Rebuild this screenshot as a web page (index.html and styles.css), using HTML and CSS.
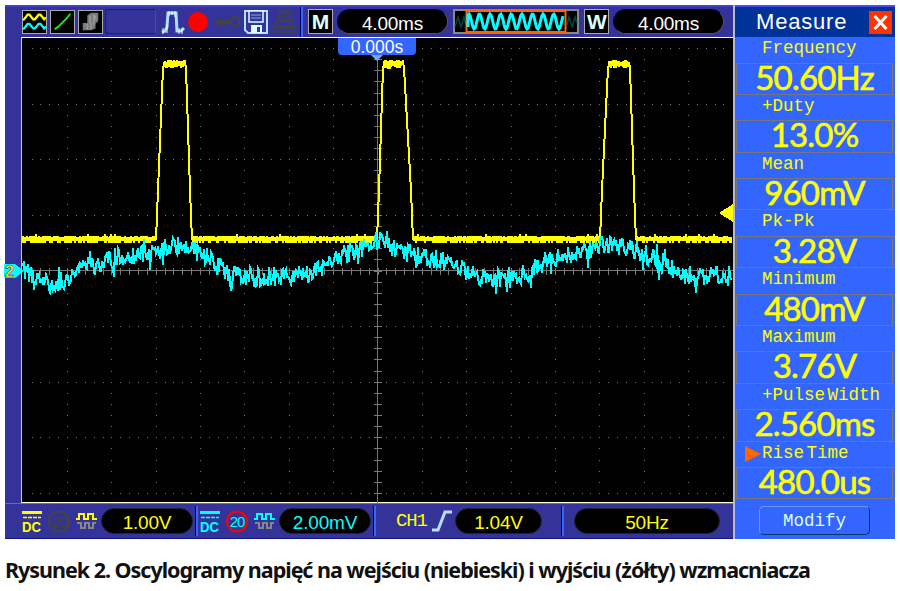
FILE: index.html
```
<!DOCTYPE html>
<html lang="pl">
<head>
  <meta charset="UTF-8">
  <meta name="viewport" content="width=device-width, initial-scale=1.0">
  <title>Oscylogramy</title>
  <link rel="stylesheet" href="styles.css">
</head>
<body>
  <figure>
    <div class="scope">
      <div class="main">
        <div class="toolbar">
          <svg class="icon box waves" viewBox="0 0 25 24">
            <path d="M0 10L2 8L5 4H7L11 9H13L17 4H19L23 9L25 7" stroke="#ff0"/>
            <path d="M0 20L2 18L5 14H7L11 19H13L17 14H19L23 19L25 17" stroke="#0ff"/>
          </svg>
          <svg class="icon box line" viewBox="0 0 25 24"><path d="M4 20L8 17L17 8L21 3" stroke="#0f0"/></svg>
          <svg class="icon box blob" viewBox="0 0 25 24">
            <path d="M9 5L13 2H21V11L18 14V19L13 21H4V13H9Z" fill="#777"/>
            <path d="M12 5V13M16 4V15M9 14V20M13 13V20M18 5V10" stroke="#999"/>
            <path d="M5 16H17M10 9H20" stroke="#888" stroke-width="1"/>
          </svg>
          <div class="slot"></div>
          <svg class="icon pulse" viewBox="0 0 25 24">
            <path d="M1 22L4 21L6 17L7 3H15L16 21H20L23 18" stroke="#adf" stroke-width="3"/>
            <path d="M2 18V24M6 14V23M8 1V6M11 1V5M14 1V7M18 18V24M21 18V24" stroke="#eff" stroke-width="1"/>
          </svg>
          <i class="record"></i>
          <svg class="icon key" viewBox="0 0 26 16">
            <path d="M0 7H16M3 7V11M6 7V11M10 7V11M13 7V10" stroke="#444" stroke-width="3"/>
            <circle cx="20" cy="7.500" r="4.500" stroke="#444"/>
          </svg>
          <svg class="icon floppy" viewBox="0 0 24 24">
            <path d="M1 1H23V23H4L1 20Z" stroke="#bdf"/>
            <path d="M5 1H19V12H5Z" fill="#339" stroke="#dff" stroke-width="1.500"/>
            <path d="M7 5H17M7 8H17" stroke="#8ae" stroke-width="1"/>
            <path d="M7 15H18V23H7Z" fill="#dff"/><path d="M13 17H16V22H13Z" fill="#339"/>
          </svg>
          <svg class="icon printer" viewBox="0 0 24 24">
            <path d="M7 1H18L16 10H5ZM3 11H20V16H3ZM1 17H23V22H1ZM9 4H15M8 7H14M5 19H19" stroke="#444" stroke-width="1.600"/>
          </svg>
          <i class="divider top"></i>
          <b class="letter">M</b>
          <div class="pill time">4.00ms</div>
          <svg class="overview" viewBox="0 0 126 25">
            <path class="frame" d="M1 1H125V24H1Z"/>
            <path class="dim" d="M2 18L5 8L8 18L11 8L13 16M114 16L116 8L119 18L122 8L124 14"/>
            <path class="window" d="M13.500 2H112.500V23H13.500Z"/>
            <path id="preview"/>
          </svg>
          <b class="letter w">W</b>
          <div class="pill time last">4.00ms</div>
        </div>

        <div class="screen">
          <svg class="plot" viewBox="22 38 711 465" shape-rendering="crispEdges">
            <g id="grid"></g>
            <path id="ch1"/>
            <path id="ch2"/>
            <path d="M733 204V222L719 213Z"/>
          </svg>
          <div class="offset">0.000s</div>
          <svg class="marker" viewBox="0 0 20 16">
            <path d="M0 1H11L20 8L11 15H0Z" fill="#0ff"/>
            <text x="1" y="14">2</text>
          </svg>
        </div>

        <div class="status">
          <svg class="icon dc" viewBox="0 0 20 21"><use href="#dc"/><text x="0" y="20.500" textLength="19" lengthAdjust="spacingAndGlyphs">DC</text></svg>
          <svg class="icon limit off" viewBox="0 0 22 23"><circle cx="11" cy="11.500" r="10"/><text x="11" y="17" text-anchor="middle">20</text></svg>
          <svg class="icon square" viewBox="0 0 21 18"><use href="#square"/></svg>
          <div class="pill volts">1.00V</div>
          <i class="divider"></i>
          <svg class="icon dc cyan" viewBox="0 0 20 21"><use href="#dc"/><text x="0" y="20.500" textLength="19" lengthAdjust="spacingAndGlyphs">DC</text></svg>
          <svg class="icon limit" viewBox="0 0 22 23"><circle cx="11" cy="11.500" r="10"/><text x="11" y="17" text-anchor="middle">20</text></svg>
          <svg class="icon square cyan" viewBox="0 0 21 18"><use href="#square"/></svg>
          <div class="pill volts cyan">2.00mV</div>
          <i class="divider"></i>
          <span class="channel">CH1</span>
          <svg class="icon slope" viewBox="0 0 20 22"><path d="M0 20H6L13 2H20" stroke="#bdf" stroke-width="3"/></svg>
          <div class="pill level">1.04V</div>
          <i class="divider end"></i>
          <div class="pill freq">50Hz</div>
        </div>
      </div>

      <div class="measure">
        <div class="title"><span>Measure</span>
          <svg class="close" viewBox="0 0 23 23"><path d="M5.500 5L17.500 18M17.500 5L5.500 18"/></svg>
        </div>
        <dl>
          <dt>Frequency</dt><dd>50.60Hz</dd>
          <dt>+Duty</dt><dd>13.0%</dd>
          <dt>Mean</dt><dd>960mV</dd>
          <dt>Pk-Pk</dt><dd>3.28V</dd>
          <dt>Minimum</dt><dd>480mV</dd>
          <dt>Maximum</dt><dd>3.76V</dd>
          <dt>+Pulse Width</dt><dd>2.560ms</dd>
          <dt class="active">Rise Time</dt><dd>480.0us</dd>
        </dl>
        <div class="modify">Modify</div>
      </div>
    </div>
    <figcaption>Rysunek 2. Oscylogramy napięć na wejściu (niebieski) i wyjściu (żółty) wzmacniacza</figcaption>
  </figure>

  <svg class="defs">
    <defs>
      <g id="dc">
        <path d="M0 1.500H20" stroke="currentColor" stroke-width="3"/>
        <path d="M1 6.500H19" stroke="currentColor" stroke-width="1.500" stroke-dasharray="4 1"/>
      </g>
      <g id="square">
        <path d="M0 7H3V2H8V7H12V2H17V7H21" stroke="currentColor"/>
        <path d="M1 11H5V16H9V11H13V16H17V11H20" stroke="#888"/>
      </g>
    </defs>
  </svg>
  <script src="scope.js"></script>
</body>
</html>
```
FILE: styles.css
```
body {
  margin: 0;
  background: #fff;
  overflow: hidden;
}

figure {
  margin: 0;
  padding: 5px 5px 0;
}

figcaption {
  margin-top: 15px;
  font: bold 21.5px/32px "Noto Sans", sans-serif;
  letter-spacing: -1.02px;
  color: #111;
  white-space: nowrap;
}

.defs {
  display: block;
  width: 0;
  height: 0;
}

.scope {
  display: flex;
  width: 890px;
  height: 534px;
  color: #ff0;
  background: #339;
}

.main {
  width: 728px;
}

.icon {
  flex: none;
  fill: none;
  stroke-width: 2;
  overflow: visible;
}

/* top bar */

.toolbar {
  display: flex;
  align-items: center;
  box-sizing: border-box;
  height: 32px;
  padding: 0 0 1px 17px;
  border-top: 2px solid #4242c8;
}

.box {
  width: 25px;
  height: 24px;
  margin-right: 2px;
  background: #000;
  border: 1px solid #aaa;
  box-sizing: border-box;
  overflow: hidden;
}

.waves {
  margin-right: 3px;
  stroke-width: 2.5;
}

.line {
  margin-right: 3px;
}

.slot {
  box-sizing: border-box;
  width: 51px;
  height: 25px;
  border: 1px solid #1a1a88;
  border-right-color: #555;
  border-radius: 3px;
}

.pulse {
  width: 25px;
  height: 24px;
  margin-left: 5px;
}

.record {
  width: 20px;
  height: 20px;
  margin-left: 2px;
  background: #f00;
  border-radius: 50%;
}

.key {
  width: 26px;
  height: 16px;
  margin-left: 7px;
}

.floppy {
  width: 24px;
  height: 24px;
  margin-left: 3px;
}

.printer {
  width: 24px;
  height: 24px;
  margin-left: 5px;
}

.divider {
  width: 1px;
  height: 30px;
  background: #000060;
  border-right: 2px solid #36f;
}

.divider.top {
  margin-left: 3px;
}

.letter {
  box-sizing: border-box;
  width: 25px;
  height: 25px;
  margin-left: 5px;
  border: 1px solid #aaa;
  background: #000;
  color: #dff;
  font: bold 21px/23px "Liberation Sans", sans-serif;
  text-align: center;
}

.pill {
  box-sizing: border-box;
  flex: none;
  height: 26px;
  background: #000;
  border: 1px solid #223;
  border-radius: 13px;
  font: 19px/27px "Liberation Sans", sans-serif;
  letter-spacing: -0.2px;
  text-align: center;
}

.time {
  width: 111px;
  height: 25px;
  margin-left: 4px;
  border-color: #000066 #555 #555 #000066;
  color: #fff;
}

.overview {
  flex: none;
  width: 126px;
  height: 25px;
  margin-left: 5px;
  fill: none;
}

.overview .frame {
  fill: #000;
  stroke: #888;
  stroke-width: 2;
}

.overview .dim {
  stroke: #044;
  stroke-width: 1.5;
}

.overview .window {
  stroke: #f60;
  stroke-width: 2;
}

#preview {
  stroke: #0ff;
  stroke-width: 3;
}

.letter.w {
  letter-spacing: -1px;
}

/* waveform area */

.screen {
  position: relative;
  box-sizing: border-box;
  height: 466px;
  margin-left: 16px;
  border-top: 1px solid #fff;
  border-left: 1px solid #ccc;
  border-bottom: 1px solid #ffc;
  background: #000;
}

.plot {
  display: block;
  width: 711px;
  height: 465px;
}

.plot path {
  fill: none;
}

.plot path:last-child {
  fill: #ff0;
}

#ch1 {
  stroke: #ff0;
  stroke-width: 2;
}

#ch2 {
  stroke: #0ff;
  stroke-width: 2;
}

.offset {
  position: absolute;
  left: 316px;
  top: 0;
  width: 78px;
  height: 17px;
  border-radius: 0 0 4px 4px;
  background: #36f;
  color: #fff;
  font: 17.5px/18px "Liberation Sans", sans-serif;
  text-align: center;
}

.offset::after {
  content: "";
  position: absolute;
  left: 33px;
  top: 17px;
  border: 6px solid transparent;
  border-top-color: #6af;
  border-bottom: 0;
}

.marker {
  position: absolute;
  left: -18px;
  top: 225px;
  width: 20px;
  height: 16px;
  overflow: visible;
}

.marker text {
  fill: #ff0;
  stroke: #339;
  stroke-width: 0.6;
  font: bold 16px "Liberation Sans", sans-serif;
}

/* channel settings */

.status {
  display: flex;
  align-items: center;
  box-sizing: border-box;
  height: 36px;
  padding-left: 17px;
  border-top: 1px solid #6666cc;
  border-bottom: 1px solid #118;
}

.cyan {
  color: #0ff;
}

.dc {
  width: 20px;
  height: 21px;
}

.dc text {
  fill: currentColor;
  font: bold 15px "Liberation Sans", sans-serif;
}

.limit {
  width: 22px;
  height: 23px;
  margin-left: 6px;
  stroke: #f00;
}

.limit text {
  fill: #0ff;
  stroke: none;
  font: 15px "Liberation Sans", sans-serif;
  letter-spacing: -1px;
}

.limit.off {
  stroke: #444;
}

.limit.off text {
  fill: #444;
}

.square {
  width: 21px;
  height: 18px;
  margin-left: 6px;
}

.volts {
  width: 92px;
  margin-left: 4px;
  margin-right: 2px;
}

.status .divider {
  margin-right: 2px;
}

.channel {
  width: 33px;
  margin-left: 18px;
  font: 19px/26px "Liberation Mono", monospace;
  letter-spacing: -1.2px;
}

.slope {
  width: 20px;
  height: 22px;
  margin-left: 3px;
}

.level {
  width: 87px;
  margin-left: 3px;
}

.status .divider.end {
  margin-left: 19px;
}

.freq {
  width: 146px;
  margin-left: 8px;
}

/* measurements */

.measure {
  box-sizing: border-box;
  width: 162px;
  border-left: 2px solid #bbc;
  background: #36f;
}

.title {
  display: flex;
  align-items: center;
  box-sizing: border-box;
  height: 32px;
  padding-left: 21px;
  border-top: 2px solid #4a4af0;
  background: #039;
  color: #fff;
  font: 22px/30px "Liberation Sans", sans-serif;
  letter-spacing: 0.8px;
}

.title span {
  width: 113px;
}

.close {
  width: 23px;
  height: 23px;
  background: #f30;
  stroke: #fff;
  stroke-width: 3;
}

dl {
  margin: 0 2px 0 1px;
}

dt {
  position: relative;
  height: 25.5px;
  padding-left: 26px;
  font: 17.5px/23px "Liberation Mono", monospace;
  word-spacing: -8px;
  white-space: nowrap;
}

dd {
  box-sizing: border-box;
  height: 32.3px;
  margin: 0;
  border: 1px solid #777;
  font: 33px/26px Lato, sans-serif;
  letter-spacing: -0.8px;
  text-align: center;
  -webkit-text-stroke: 0.6px #ff0;
}

.active::before {
  content: "";
  position: absolute;
  left: 9px;
  top: 4px;
  border: 8px solid transparent;
  border-left: 16px solid #f60;
  border-right: 0;
}

.modify {
  box-sizing: border-box;
  width: 111px;
  height: 29px;
  margin: 7px 0 0 24px;
  border: 1px solid #69f;
  border-right-color: #036;
  border-bottom-color: #036;
  border-radius: 5px;
  color: #dff;
  font: 17.5px/28px "Liberation Mono", monospace;
  text-align: center;
}
```
FILE: scope.js
```
// small seeded generator, so the noise is the same on every load
let seed = 41;
function rnd() {
  seed = (seed * 16807) % 2147483647;
  return seed / 2147483647;
}

function level(points, x) {
  let i = 1;
  while (i < points.length - 1 && points[i][0] < x) i++;
  const [x0, y0] = points[i - 1];
  const [x1, y1] = points[i];
  return y0 + (y1 - y0) * (x - x0) / (x1 - x0);
}

// graticule
const cx = 377.5, cy = 270.5, dx = 44.35, dy = 55.6;
let dots = '';
const dot = (x, y, w, h) => {
  dots += `<rect x="${Math.round(x)}" y="${Math.round(y)}" width="${w}" height="${h}" fill="#777"/>`;
};

for (let r = -4; r <= 4; r++) {
  for (let i = -39; i <= 39; i++) {
    if (r) dot(cx + i * dx / 5, cy + r * dy, 1, 1);
  }
}
for (let c = -7; c <= 7; c++) {
  for (let i = -19; i <= 20; i++) {
    if (c) dot(cx + c * dx, cy + i * dy / 5, 1, 1);
  }
}
for (let i = -39; i <= 39; i++) dot(cx + i * dx / 5, cy - 3, 1, 7);
for (let i = -19; i <= 20; i++) dot(cx - 4, cy + i * dy / 5, 8, 1);
dot(22, 270, 711, 1);
dot(377, 38, 1, 465);
document.getElementById('grid').innerHTML = dots;

// channel 1: pulses
const pulses = [[156, 163, 186, 192], [377, 383, 404, 413], [600, 608, 630, 636]];
let ch1 = '';
for (let x = 23; x < 732; x++) {
  const p = pulses.find(p => x >= p[0] && x <= p[3]);
  if (!p) {
    ch1 += `M${x} ${rnd() > 0.97 ? 234 : 236 + Math.round(rnd())}V${rnd() > 0.6 ? 243 : 241}`;
  } else if (x > p[1] && x < p[2]) {
    ch1 += `M${x} ${60 + Math.round(rnd() * 2)}V${65 + Math.round(rnd() * 4)}`;
  }
}
pulses.forEach(([a, b, c, d]) => {
  ch1 += `M${a} 240L${a + 2} 190L${b} 68L${b + 2} 62M${c - 1} 62L${c} 68L${d - 2} 190L${d} 240`;
});
document.getElementById('ch1').setAttribute('d', ch1);

// channel 2: noisy ripple
const ripple = [
  [22, 268], [35, 281], [50, 283], [70, 280], [82, 269], [100, 264], [120, 256], [140, 254],
  [160, 249], [175, 246], [185, 247], [200, 252], [215, 264], [230, 272], [245, 276], [262, 277],
  [280, 276], [300, 276], [315, 272], [330, 264], [350, 252], [365, 247], [377, 240], [390, 248],
  [410, 253], [430, 258], [450, 264], [470, 273], [487, 281], [500, 279], [515, 277], [530, 270],
  [545, 262], [560, 258], [580, 252], [600, 246], [615, 245], [630, 248], [645, 254], [660, 263],
  [675, 272], [690, 276], [710, 276], [732, 275]
];
let ch2 = '';
for (let x = 23; x < 732; x++) {
  const amp = rnd() > 0.93 ? 38 : 20;
  const y = level(ripple, x) + (rnd() - 0.5) * amp;
  ch2 += `${ch2 ? 'L' : 'M'}${x} ${Math.round(y)}`;
}
document.getElementById('ch2').setAttribute('d', ch2);

// memory overview in the top bar
let preview = 'M15 18';
for (let i = 0; i < 96; i++) {
  preview += `L${15 + i} ${(12.5 + 7.5 * Math.cos(i * 2 * Math.PI / 10.6 + 2.6)).toFixed(1)}`;
}
document.getElementById('preview').setAttribute('d', preview);
```
